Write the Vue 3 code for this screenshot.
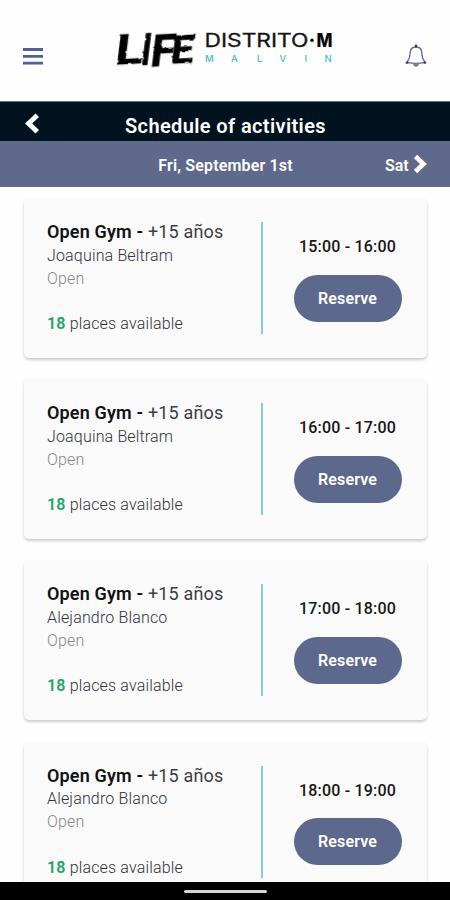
<script setup>
const activities = [
  { coach: 'Joaquina Beltram', time: '15:00 - 16:00' },
  { coach: 'Joaquina Beltram', time: '16:00 - 17:00' },
  { coach: 'Alejandro Blanco', time: '17:00 - 18:00' },
  { coach: 'Alejandro Blanco', time: '18:00 - 19:00' },
]
</script>

<template>
  <div class="screen">
    <header class="top">
      <svg class="menu" viewBox="0 0 20 17" aria-label="Menu">
        <path d="M0 1.5H20M0 8.4H20M0 15.2H20" />
      </svg>
      <svg class="logo" viewBox="0 0 220 40">
        <defs>
          <filter id="brush" x="-5%" y="-10%" width="110%" height="120%">
            <feTurbulence type="fractalNoise" baseFrequency="0.1 0.22" numOctaves="2" seed="7" result="n" />
            <feDisplacementMap in="SourceGraphic" in2="n" scale="3" xChannelSelector="R" yChannelSelector="G" />
          </filter>
        </defs>
        <g class="life" filter="url(#brush)" transform="translate(0 34.5) rotate(-3) skewX(-10)">
          <text x="-2" y="0" font-size="42" textLength="28" lengthAdjust="spacingAndGlyphs">L</text>
          <text x="24" y="2" font-size="44" textLength="10" lengthAdjust="spacingAndGlyphs">I</text>
          <text x="34" y="4" font-size="44" textLength="24" lengthAdjust="spacingAndGlyphs">F</text>
          <text x="54" y="1.5" font-size="39" textLength="23" lengthAdjust="spacingAndGlyphs">E</text>
        </g>
        <text class="distrito" x="88.5" y="17" textLength="104" lengthAdjust="spacingAndGlyphs">DISTRITO</text>
        <circle class="dot" cx="196" cy="10.3" r="1.7" />
        <text class="m" x="200.5" y="17" textLength="16" lengthAdjust="spacingAndGlyphs">M</text>
        <text class="malvin" x="89 115 141 163.5 188.5 208.5" y="32">MALVIN</text>
      </svg>
      <svg class="bell" viewBox="0 0 22 24" aria-label="Notifications">
        <path d="M2 18.4Q5.2 14 5.2 8.8Q5.4 3 11 3Q16.6 3 16.8 8.8Q16.8 14 20 18.4Q11 20.2 2 18.4Z" />
        <path class="knob" d="M11 1.6V2.4M1.8 18.6H2.4M19.6 18.6H20.2" />
        <path class="clapper" d="M8 19.6H14Q13.4 22.8 11 22.8Q8.6 22.8 8 19.6Z" />
      </svg>
    </header>

    <div class="title-bar">
      <svg class="back" viewBox="0 0 15 21"><path d="M12.3 2.2L3.6 10.5L12.3 18.8" /></svg>
      <h1>Schedule of activities</h1>
    </div>

    <nav class="date-bar">
      <span class="date">Fri, September 1st</span>
      <span class="next">
        Sat
        <svg viewBox="0 0 14 20"><path d="M2.5 2.5L10.5 10L2.5 17.5" /></svg>
      </span>
    </nav>

    <main class="list">
      <article v-for="a in activities" :key="a.time" class="card">
        <div class="info">
          <h2><b>Open Gym -</b> +15 años</h2>
          <p class="coach">{{ a.coach }}</p>
          <p class="status">Open</p>
          <p class="places"><b>18</b> places available</p>
        </div>
        <div class="booking">
          <span class="time">{{ a.time }}</span>
          <button type="button">Reserve</button>
        </div>
      </article>
    </main>

    <footer class="system"><i></i></footer>
  </div>
</template>

<style>
body { background: #fff; overflow: hidden; }
</style>

<style scoped>
.screen {
  width: 450px;
  height: 900px;
  display: flex;
  flex-direction: column;
  overflow: hidden;
  background: #fefefe;
  font-family: Roboto, "Liberation Sans", sans-serif;
}
h1, h2, p { margin: 0; }
svg { display: block; flex: none; fill: none; }
.top {
  flex: none;
  height: 102px;
  box-sizing: border-box;
  padding: 11px 23px 0;
  display: flex;
  align-items: center;
  justify-content: space-between;
  border-bottom: 1px solid #6d7478;
}
.menu { width: 20px; height: 17px; stroke: #555f91; stroke-width: 2.8; }
.logo { width: 220px; height: 40px; margin: 0 0 13px 3px; overflow: visible; }
.life { fill: #050505; stroke: #050505; stroke-width: 0.5; font-family: Roboto, sans-serif; font-weight: 700; }
.distrito { fill: #151515; stroke: #151515; stroke-width: 0.3; font: 400 18.5px Inter, sans-serif; }
.dot { fill: #080808; }
.m { fill: #080808; font: 800 18.5px Inter, sans-serif; }
.malvin { fill: #45bccb; font: 500 9.5px Inter, sans-serif; }
.bell { width: 22px; height: 24px; stroke: #5d6594; stroke-width: 1.3; }
.knob { stroke: #34357f; stroke-width: 2.4; stroke-linecap: round; }
.clapper { fill: #777b9f; stroke: none; }
.title-bar {
  flex: none;
  height: 39px;
  display: grid;
  grid-template-columns: 51px 1fr 50px;
  align-items: center;
  background: #021320;
  color: #fff;
}
.back { width: 15px; height: 21px; margin: 4px 0 0 25px; stroke: #fff; stroke-width: 5; }
h1 { padding-top: 8px; text-align: center; font-size: 20px; line-height: 24px; font-weight: 600; letter-spacing: 0.38px; }
.date-bar {
  flex: none;
  height: 46px;
  display: grid;
  grid-template-columns: 90px 1fr 90px;
  align-items: center;
  background: #5e698c;
  color: #fff;
  font-size: 16px;
  font-weight: 600;
}
.date { grid-column: 2; padding: 2px 0 0 1px; text-align: center; letter-spacing: 0.16px; }
.next { display: flex; gap: 4px; align-items: center; padding: 3px 0 0 25px; }
.next svg { width: 14px; height: 20px; margin-top: -4px; stroke: #fff; stroke-width: 4.6; }
.list {
  flex: 1;
  min-height: 0;
  overflow: hidden;
  padding: 11px 23px 0 24px;
  display: flex;
  flex-direction: column;
  gap: 21.6px;
}
.card {
  flex: none;
  height: 159.6px;
  box-sizing: border-box;
  padding: 24px 25.5px 23.6px 23px;
  display: flex;
  border-radius: 5px;
  background: #fafafa;
  box-shadow: 0 2px 3px rgba(0, 0, 0, 0.2);
}
.info { width: 214px; border-right: 2px solid #8bcbd5; color: #30323d; font-size: 16px; line-height: 23px; }
.info > * { position: relative; top: -2px; }
h2 { font-size: 18px; line-height: 23px; font-weight: 400; color: #3c3e44; letter-spacing: 0.16px; }
h2 b { font-weight: 600; color: #121212; }
.coach, .places { font-weight: 300; letter-spacing: 0.16px; }
.status { color: #888; font-weight: 300; letter-spacing: 0.16px; }
.info .coach, .info .status { top: -1.4px; }
.places { margin-top: 23px; }
.places b { color: #21a66b; font-weight: 600; }
.booking { flex: 1; display: flex; flex-direction: column; align-items: flex-end; }
.time { width: 108px; padding-top: 13px; text-align: center; font-size: 16px; line-height: 23px; font-weight: 500; letter-spacing: 0.18px; color: #171717; white-space: nowrap; }
button {
  width: 108px;
  height: 47px;
  margin-top: 16.6px;
  padding: 0;
  border: 0;
  border-radius: 24px;
  background: #5d688d;
  color: #fff;
  font: 600 16px Roboto, sans-serif;
  letter-spacing: 0.12px;
}
.system { flex: none; height: 18px; background: #000; display: flex; align-items: center; justify-content: center; }
.system i { width: 83px; height: 3px; border-radius: 2px; background: #d6d6d6; }
</style>
